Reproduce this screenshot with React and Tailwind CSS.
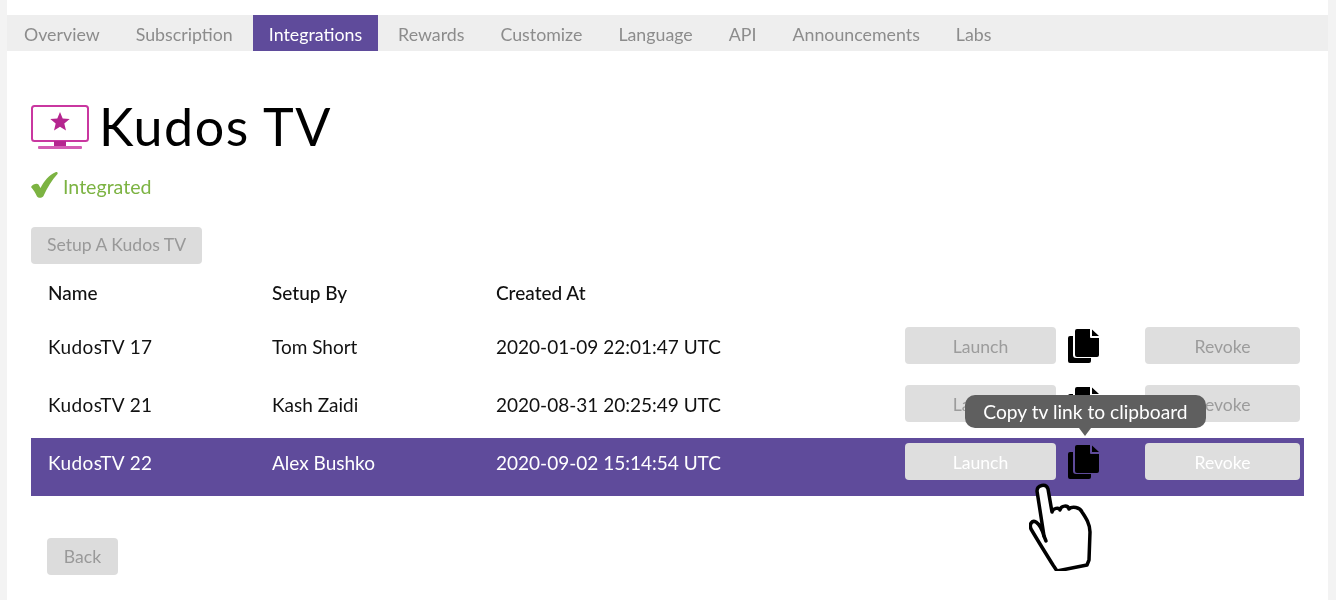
const tabs = ["Overview", "Subscription", "Integrations", "Rewards", "Customize", "Language", "API", "Announcements", "Labs"];

const rows = [
  { name: "KudosTV 17", by: "Tom Short", at: "2020-01-09 22:01:47 UTC" },
  { name: "KudosTV 21", by: "Kash Zaidi", at: "2020-08-31 20:25:49 UTC" },
  { name: "KudosTV 22", by: "Alex Bushko", at: "2020-09-02 15:14:54 UTC", active: true },
];

const TvIcon = () => (
  <svg width="58" height="45" viewBox="0 0 58 45" fill="none">
    <rect x="1" y="1" width="56" height="35" rx="2.5" stroke="#c937a0" strokeWidth="2" />
    <path d="M29 7l2.7 6.600 7 .5-5.400 4.500 1.700 6.900-6-3.800-6 3.800 1.700-6.900-5.400-4.500 7-.5z" fill="#b5258f" />
    <rect x="23" y="36" width="12" height="6" fill="#b5258f" />
    <rect x="7" y="41" width="44" height="3" rx="1" fill="#d45cb4" />
  </svg>
);

const CheckIcon = () => (
  <svg width="27" height="26" viewBox="0 0 27 26">
    <path d="M0 15c2-3 6-4 7.500-2.500l2 3.500C13 9 18 3 25 0c1.500 0 2 1 1.500 2C21 8 16 16 12.500 24c-1 2-5 2.500-6.500.5C4.500 21 2.500 18 0 15z" fill="#7cb342" />
  </svg>
);

const CopyIcon = () => (
  <svg width="31" height="34" viewBox="0 0 31 34" fill="#000">
    <path d="M2 7h3v19a3 3 0 0 0 3 3h15v3a2 2 0 0 1-2 2H2a2 2 0 0 1-2-2V9a2 2 0 0 1 2-2z" />
    <path d="M9 0h13v8a1 1 0 0 0 1 1h8v17a2 2 0 0 1-2 2H9a2 2 0 0 1-2-2V2a2 2 0 0 1 2-2z" />
    <path d="M24 .5L31 7h-7z" />
  </svg>
);

const HandIcon = () => (
  <svg width="63" height="88" viewBox="0 0 63 88" fill="#fff" stroke="#000" strokeWidth="3.500" strokeLinejoin="round" strokeLinecap="round">
    <path d="M8 8c0-6 9-8 11-2l4 23c1-4 7-5 8-2 1-5 8-5 9-1 3-3 11-2 13 3 4 6 8 12 8 20l-1 28-2 5-30 6-4-6C19 74 9 58 2 46c-2-5 1-9 5-7 3 2 6 7 8 14z" />
    <path d="M15 53l2 5" />
  </svg>
);

const Btn = ({ className, children }) => (
  <button className={"h-[37px] pb-[3px] bg-[#dedede] rounded-[4px] text-[17.6px] " + className}>{children}</button>
);

const App = () => {
  return (
    <div className="w-[1336px] h-[600px] overflow-hidden bg-[#f3f3f3] font-['Lato',sans-serif] blur-[0.6px]">
      <div className="ml-[7px] mr-[8px] h-[600px] bg-white pt-[15px]">
        <div className="flex h-[36px] bg-[#eeeeee] pl-[1px]">
          {tabs.map((t) => (
            <div
              key={t}
              className={
                t === "Integrations"
                  ? "flex items-center pt-[2px] px-[16px] mr-[4px] bg-[#5f4b9b] text-[17.8px] text-white"
                  : "flex items-center pt-[2px] px-[16px] mr-[4px] text-[17.8px] text-[#8c8c8c]"
              }
            >
              {t}
            </div>
          ))}
        </div>

        <div className="pl-[24px] pr-[24px]">
          <div className="flex items-center mt-[46px] h-[60px] gap-[10px]">
            <TvIcon />
            <h1 className="mb-[2px] text-[52px] leading-none tracking-[1.500px] text-black">Kudos TV</h1>
          </div>

          <div className="flex items-center mt-[13px] h-[30px] gap-[5px]">
            <CheckIcon />
            <span className="text-[19.6px] text-[#7cb342] mt-[4px]">Integrated</span>
          </div>

          <button className="mt-[27px] block w-[171px] h-[37px] bg-[#dcdcdc] rounded-[4px] text-[17.6px] text-[#999999]">
            Setup A Kudos TV
          </button>

          <div className="flex items-center h-[58px] pl-[17px] text-[19px] font-medium text-[#111111]">
            <div className="w-[224px]">Name</div>
            <div className="w-[224px]">Setup By</div>
            <div>Created At</div>
          </div>

          {rows.map((r) => (
            <div
              key={r.name}
              className={
                "relative flex items-start h-[58px] pt-[5px] pl-[17px] pr-[4px] text-[19px] leading-[40px] " +
                (r.active ? "bg-[#5f4b9b] text-white" : "text-[#111111]")
              }
            >
              <div className="w-[224px] tracking-[0.4px]">{r.name}</div>
              <div className="w-[224px]">{r.by}</div>
              <div className="w-[409px]">{r.at}</div>
              <Btn className={"w-[151px] " + (r.active ? "text-white" : "text-[#9c9c9c]")}>Launch</Btn>
              <div className="ml-[12px] w-[77px] mt-[2px]">
                <CopyIcon />
              </div>
              <Btn className={"w-[155px] " + (r.active ? "text-white" : "text-[#9c9c9c]")}>Revoke</Btn>

              {r.active && (
                <>
                  <div className="absolute left-[934px] top-[-43px] w-[241px] h-[33px] flex items-center justify-center rounded-[10px] bg-[#5f5f5f] text-[19.2px] leading-none text-white">
                    Copy tv link to clipboard
                    <div className="absolute left-[114px] bottom-[-8px] w-0 h-0 border-x-[6px] border-x-transparent border-t-[8px] border-t-[#5f5f5f]" />
                  </div>
                  <div className="absolute left-[998px] top-[45px]">
                    <HandIcon />
                  </div>
                </>
              )}
            </div>
          ))}

          <button className="mt-[42px] ml-[16px] block w-[71px] h-[37px] pt-[1px] bg-[#dcdcdc] rounded-[4px] text-[17.6px] text-[#999999]">
            Back
          </button>
        </div>
      </div>
    </div>
  );
};

export default App;
